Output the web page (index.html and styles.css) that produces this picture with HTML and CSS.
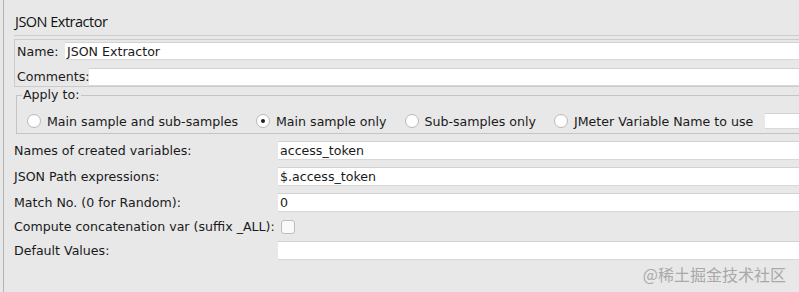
FILE: index.html
```html
<!DOCTYPE html>
<html lang="en">
<head>
  <meta charset="UTF-8">
  <title>JSON Extractor</title>
  <link rel="stylesheet" href="styles.css">
</head>
<body>

  <div class="panel">
    <div class="title">JSON Extractor</div>

    <div class="namebox">
      <div class="namerow">
        <label>Name:</label>
        <div class="field">JSON Extractor</div>
      </div>
      <div class="namerow comments">
        <label>Comments:</label>
        <div class="field"></div>
      </div>
    </div>

    <div class="apply">
      <span class="legend">Apply to:</span>
      <div class="radios">
        <span class="radio"></span><span class="rlabel">Main sample and sub-samples</span>
        <span class="radio on"></span><span class="rlabel">Main sample only</span>
        <span class="radio"></span><span class="rlabel">Sub-samples only</span>
        <span class="radio"></span><span class="rlabel">JMeter Variable Name to use</span>
        <div class="field varname"></div>
      </div>
    </div>

    <div class="rows">
      <div class="row">
        <label>Names of created variables:</label>
        <div class="field">access_token</div>
      </div>
      <div class="row">
        <label>JSON Path expressions:</label>
        <div class="field">$.access_token</div>
      </div>
      <div class="row">
        <label>Match No. (0 for Random):</label>
        <div class="field">0</div>
      </div>
      <div class="row check">
        <label>Compute concatenation var (suffix _ALL):</label>
        <span class="checkbox"></span>
      </div>
      <div class="row">
        <label>Default Values:</label>
        <div class="field"></div>
      </div>
    </div>

    <div class="watermark">@稀土掘金技术社区</div>
  </div>

</body>
</html>
```

FILE: styles.css
```css
:root {
  --bg: #e8e8e8;
  --line: #cbcbcb;
  --text: #1a1a1a;
}

body {
  margin: 0;
  padding-left: 3px;
  background-color: var(--bg);
  color: var(--text);
  font-family: 'DejaVu Sans', sans-serif;
  font-size: 12.6px;
  overflow: hidden;
}

label {
  white-space: nowrap;
}

.panel {
  border-left: 1px solid #b4b4b4;
  padding-left: 10px;
  height: 292px;
  position: relative;
}

.title {
  height: 36px;
  box-sizing: border-box;
  padding: 12px 0 0 1px;
  font-family: 'Open Sans', sans-serif;
  font-size: 14.5px;
  letter-spacing: -0.5px;
  line-height: 20px;
  color: #111;
  border-bottom: 1px solid var(--line);
}

.namebox {
  margin-top: 3px;
  border: 1px solid var(--line);
  border-right: none;
  padding: 2px 0 1px 2px;
}

.namerow {
  display: flex;
  align-items: center;
  height: 18px;
}

.namerow label {
  width: 48px;
}

.namerow.comments {
  margin-top: 8px;
  height: 17px;
}

.namerow.comments label {
  width: 72px;
}

.field {
  flex: 1;
  height: 18px;
  box-sizing: border-box;
  background: #fff;
  border-top: 1px solid #d2d2d2;
  border-bottom: 1px solid #d8d8d8;
  padding-left: 2px;
  line-height: 17px;
}

.apply {
  margin: 8px 0 0 2px;
  border: 1px solid #c4c4c4;
  border-right: none;
  height: 37px;
  position: relative;
}

.legend {
  position: absolute;
  left: 5px;
  top: -9px;
  padding: 0 2px 0 1px;
  background: var(--bg);
  line-height: 16px;
}

.radios {
  display: flex;
  align-items: center;
  padding: 17px 0 0 10px;
}

.radio {
  width: 14px;
  height: 14px;
  box-sizing: border-box;
  border-radius: 50%;
  border: 1px solid #b9b9b9;
  background: #fdfdfd;
  margin-right: 6px;
  position: relative;
}

.radio.on::after {
  content: "";
  position: absolute;
  left: 4px;
  top: 4px;
  width: 4px;
  height: 4px;
  border-radius: 50%;
  background: #222;
}

.rlabel {
  margin-right: 18px;
}

.field.varname {
  height: 16px;
  margin-left: -6px;
}

.rows {
  margin-top: 7px;
}

.row {
  display: flex;
  align-items: center;
  height: 19px;
  margin-bottom: 7px;
}

.row label {
  width: 264px;
}

.row .field {
  height: 19px;
}

.row.check {
  height: 15px;
}

.checkbox {
  width: 14px;
  height: 14px;
  box-sizing: border-box;
  margin: 1px 0 0 3px;
  border: 1px solid #bdbdbd;
  border-radius: 3px;
  background: #fafafa;
}

.watermark {
  position: absolute;
  right: 13px;
  top: 262px;
  font-family: 'Noto Sans CJK SC', sans-serif;
  font-size: 16px;
  color: #a9a9a9;
}
```
